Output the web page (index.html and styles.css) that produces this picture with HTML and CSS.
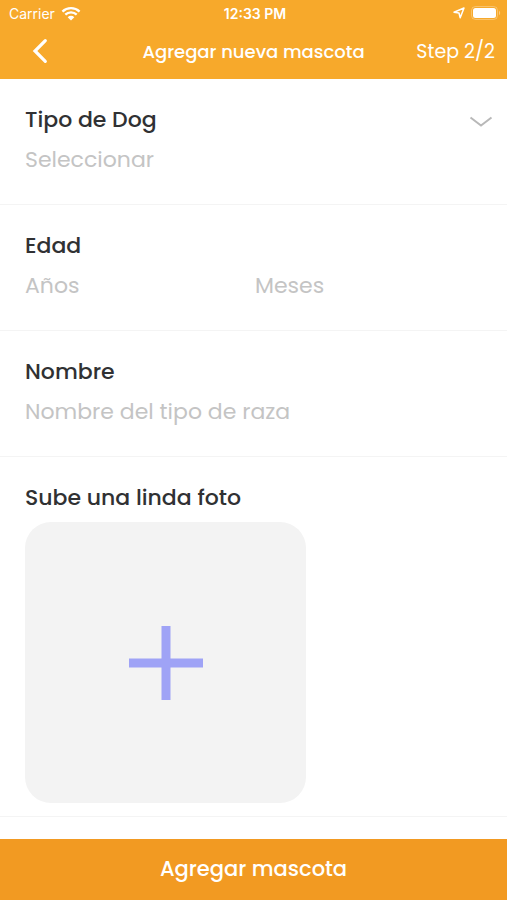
FILE: index.html
```html
<!DOCTYPE html>
<html lang="es">

<head>
    <meta charset="UTF-8">
    <meta name="viewport" content="width=device-width, initial-scale=1.0">
    <title>Agregar nueva mascota</title>
    <link rel="stylesheet" href="styles.css">
</head>

<body>
    <header class="header">
        <div class="status-bar">
            <div class="carrier">
                <span>Carrier</span>
                <svg width="20" height="15" viewBox="0 0 18 14" aria-hidden="true">
                    <path d="M1 5.2a11.6 11.6 0 0 1 16 0M3.7 8a7.7 7.7 0 0 1 10.6 0" fill="none" stroke="currentColor" stroke-width="2.2"/>
                    <path d="M9 13.6L5.9 10.4a4.4 4.4 0 0 1 6.2 0z" fill="currentColor"/>
                </svg>
            </div>
            <span class="time">12:33 PM</span>
            <div class="indicators">
                <svg width="12" height="12" viewBox="0 0 12 12" aria-hidden="true">
                    <path d="M11 1L7.200 10.800 6 6 1 5.200z" fill="none" stroke="currentColor" stroke-width="1.5" stroke-linejoin="round"/>
                </svg>
                <svg width="30" height="14" viewBox="0 0 30 14" aria-hidden="true">
                    <rect x="0.5" y="0.5" width="26" height="13" rx="4" fill="none" stroke="currentColor" opacity="0.3"/>
                    <rect x="2" y="2" width="23" height="10" rx="2.5" fill="currentColor"/>
                    <path d="M28 4.800a2.600 2.600 0 0 1 0 4.400z" fill="currentColor" opacity="0.4"/>
                </svg>
            </div>
        </div>
        <div class="nav-bar">
            <button type="button" class="back" aria-label="Volver">
                <svg width="16" height="26" viewBox="0 0 16 26" aria-hidden="true">
                    <path d="M13.3 2.7L3 13l10.3 10.3" fill="none" stroke="currentColor" stroke-width="3.2" stroke-linecap="round"/>
                </svg>
            </button>
            <h1>Agregar nueva mascota</h1>
            <span class="step">Step 2/2</span>
        </div>
    </header>

    <form class="form" id="petForm">
        <div class="form-group select-group">
            <label for="breed">Tipo de Dog</label>
            <select id="breed">
                <option>Seleccionar</option>
            </select>
            <svg class="chevron" width="24" height="12" viewBox="0 0 24 12" aria-hidden="true">
                <path d="M1.5 1.5L12 9.5l10.5-8" fill="none" stroke="currentColor" stroke-width="2"/>
            </svg>
        </div>

        <div class="form-group">
            <label for="years">Edad</label>
            <div class="age">
                <input type="text" id="years" placeholder="Años">
                <input type="text" id="months" placeholder="Meses" aria-label="Meses">
            </div>
        </div>

        <div class="form-group">
            <label for="name">Nombre</label>
            <input type="text" id="name" placeholder="Nombre del tipo de raza">
        </div>

        <div class="form-group photo-group">
            <label for="photo">Sube una linda foto</label>
            <button type="button" id="photo" class="photo">
                <svg width="74" height="74" viewBox="0 0 74 74" aria-hidden="true">
                    <path d="M37 0v74M0 37h74" fill="none" stroke="currentColor" stroke-width="9"/>
                </svg>
            </button>
        </div>
    </form>

    <button type="submit" form="petForm" class="submit">Agregar mascota</button>
</body>

</html>
```

FILE: styles.css
```css
* {
    box-sizing: border-box;
}

body {
    min-height: 100vh;
    margin: 0;
    display: flex;
    flex-direction: column;
    font-family: Poppins, Inter, sans-serif;
    background-color: #fff;
    color: #303133;
}

button,
input,
select {
    margin: 0;
    padding: 0;
    border: 0;
    background: none;
    font-family: inherit;
}

button {
    cursor: pointer;
}

svg {
    display: block;
}

.header {
    background-color: #f7a92b;
    color: #fff;
}

.status-bar {
    display: grid;
    grid-template-columns: 1fr auto 1fr;
    align-items: center;
    height: 26px;
    padding: 0 6px 0 9px;
    font-family: Inter, sans-serif;
    font-size: 14px;
}

.carrier,
.indicators {
    display: flex;
    align-items: center;
    gap: 6px;
}

.indicators {
    justify-content: flex-end;
}

.time {
    font-weight: 600;
}

.nav-bar {
    display: grid;
    grid-template-columns: 1fr auto 1fr;
    align-items: center;
    height: 53px;
    padding: 0 12px 3px 32px;
}

.back {
    justify-self: start;
    color: inherit;
}

h1 {
    margin: 0 20px 0 0;
    font-size: 18px;
    font-weight: 500;
}

.step {
    justify-self: end;
    font-size: 19px;
}

.form {
    flex: 1;
}

.form-group {
    display: flex;
    flex-direction: column;
    gap: 8px;
    padding: 25px 26px 30px 25px;
    border-bottom: 1px solid #f4f4f4;
}

label {
    font-size: 22px;
    font-weight: 500;
    line-height: 32px;
}

input,
select {
    width: 100%;
    height: 30px;
    font-size: 22px;
    color: #303133;
    outline: none;
}

select,
input::placeholder {
    color: #c4c4c4;
    opacity: 1;
}

select {
    appearance: none;
}

.select-group {
    position: relative;
}

.chevron {
    position: absolute;
    top: 37px;
    right: 14px;
    color: #b8b8b8;
    pointer-events: none;
}

.age {
    display: grid;
    grid-template-columns: 1fr 1fr;
    gap: 4px;
}

.photo-group {
    padding-bottom: 13px;
}

.photo {
    display: flex;
    align-items: center;
    justify-content: center;
    width: 281px;
    max-width: 100%;
    aspect-ratio: 1;
    border-radius: 26px;
    background-color: #f3f3f3;
    color: #9fa3f6;
}

.submit {
    position: sticky;
    bottom: 0;
    height: 61px;
    padding-bottom: 2px;
    background-color: #f29a22;
    color: #fff;
    font-size: 21px;
    font-weight: 500;
}
```
